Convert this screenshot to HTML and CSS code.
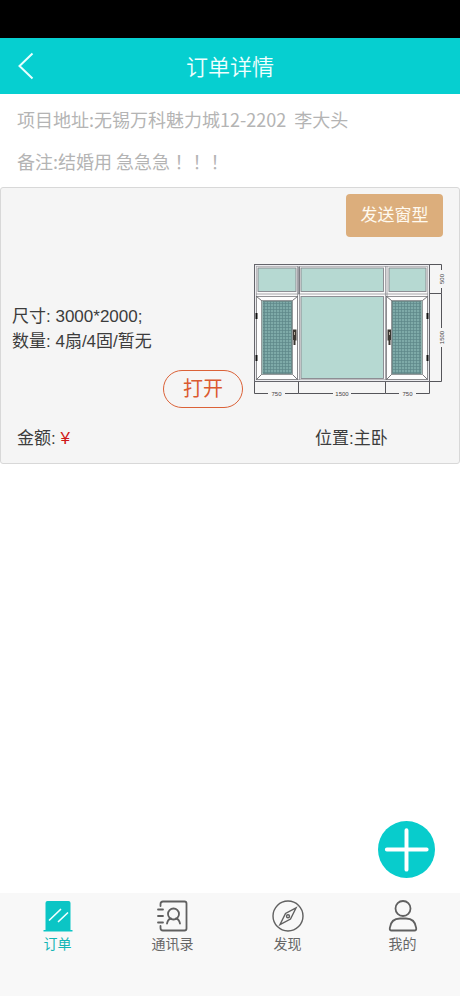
FILE: index.html
```html
<!DOCTYPE html>
<html lang="zh-CN">
<head>
<meta charset="utf-8">
<meta name="viewport" content="width=device-width, initial-scale=1">
<title>订单详情</title>
<link rel="stylesheet" href="styles.css">
</head>
<body>
<div class="status-bar"></div>
<header class="header">
  <button class="back" type="button" aria-label="返回">
    <svg width="16" height="28" viewBox="0 0 16 28"><path d="M14.500 1.500L1.500 14L14.500 26.500"/></svg>
  </button>
  <h1 class="title">订单详情</h1>
</header>
<main class="main">
  <section class="info">
    <p>项目地址:无锡万科魅力城12-2202&nbsp; 李大头</p>
    <p>备注:结婚用 急急急<span class="marks" lang="zh-TW">！！！</span></p>
  </section>
  <article class="card">
    <button class="send" type="button">发送窗型</button>
    <div class="detail">
      <div class="spec">
        <p>尺寸: 3000*2000;</p>
        <p>数量: 4扇/4固/暂无</p>
        <button class="open" type="button">打开</button>
      </div>
      <svg class="window" viewBox="250 260 200 148" role="img" aria-label="窗型图">
        <defs>
          <pattern id="mesh" width="3" height="3" patternUnits="userSpaceOnUse">
            <rect width="3" height="3" fill="#7eaaa8"/>
            <path d="M0 .5H3M.5 0V3" stroke="#5d8688" stroke-width=".7"/>
          </pattern>
          <g id="sash">
            <rect x="256.500" y="296.500" width="41" height="83" fill="#fdfdfd" stroke="#77777b" stroke-width=".8"/>
            <path d="M256.500 296.500l5 4M297.500 296.500l-5 4M256.500 379.500l5-5M297.500 379.500l-5-5" stroke="#55555b" stroke-width=".8"/>
            <rect x="261.500" y="300.500" width="31" height="74" fill="#b6d9d2" stroke="#77777b" stroke-width=".7"/>
            <rect x="263" y="301.500" width="28.500" height="72" fill="url(#mesh)" stroke="#5b7577" stroke-width=".7"/>
            <path d="M256.500 313v6M256.500 355v6" stroke="#111" stroke-width="2"/>
            <path d="M293 329.500h3.500v11h-1v4.500h-2v-5h-.5z" fill="#3c3832"/>
            <path d="M294.500 332v3" stroke="#b8ada0" stroke-width="1"/>
          </g>
        </defs>
        <rect x="254.500" y="264.500" width="175" height="117" fill="#ececef" stroke="#65656b"/>
        <rect x="256.500" y="266.500" width="171" height="113" fill="#fafafa" stroke="#a6a6aa" stroke-width=".7"/>
        <g fill="#b6d9d2" stroke="#85858c" stroke-width=".9">
          <rect x="258" y="268" width="38" height="23.500"/>
          <rect x="301" y="268" width="82.500" height="23.500"/>
          <rect x="389" y="268" width="37" height="23.500"/>
          <rect x="301" y="296.500" width="82.500" height="82"/>
        </g>
        <path d="M297.500 266V380M299.500 266V380M385.500 266V380M387 266V380M256 294H428" fill="none" stroke="#929298" stroke-width=".8"/>
        <path d="M299 267V294" stroke="#606068" stroke-width="1.200"/>
        <use href="#sash"/>
        <use href="#sash" transform="translate(684 0) scale(-1 1)"/>
        <path d="M254.500 382V393.500H268M285 393.500H298.500V382M298.500 393.500H333M351 393.500H385.500V382M385.500 393.500H399M416 393.500H429.500V382M430 264.500H441.500V270M441.500 288V293.500H430M441.500 293.500V328M441.500 347V381.500H430" fill="none" stroke="#55555a" stroke-width="1"/>
        <g class="dims">
          <text x="276.500" y="395.500">750</text>
          <text x="342" y="395.500">1500</text>
          <text x="407.500" y="395.500">750</text>
          <text transform="translate(443.500 279) rotate(-90)">500</text>
          <text transform="translate(443.500 337.500) rotate(-90)">1500</text>
        </g>
      </svg>
    </div>
    <div class="summary">
      <span>金额: <b class="price">¥</b></span>
      <span>位置:主卧</span>
    </div>
  </article>
</main>
<button class="add" type="button" aria-label="添加">
  <svg viewBox="0 0 58 58"><path d="M29 9.500V49.500M9 29H49.500"/></svg>
</button>
<nav class="tabs">
  <a class="tab active" href="#orders">
    <svg viewBox="0 0 32 32"><path d="M3.500 30V3q0-2 2-2H26.500q2 0 2 2V30h2v1.500H1.500V30z" fill="#0bc5c5"/><path d="M7.500 20L18.500 9.500M16.500 21.500L25.500 13" stroke="#f0ffff" stroke-width="1.700" stroke-linecap="round"/></svg>
    <span>订单</span>
  </a>
  <a class="tab" href="#contacts">
    <svg viewBox="0 0 32 32" class="line"><path d="M3.500 6V4q0-2.500 2.500-2.500H27.500q2 0 2 2V28.500q0 2-2 2H6q-2.500 0-2.500-2.500V26M1 9.500H6M1 16H6M1 22.500H6"/><circle cx="16.500" cy="14" r="5.500"/><path d="M10 23.500q1-4.500 4-5M23 23.500q-1-4.500-4-5"/></svg>
    <span>通讯录</span>
  </a>
  <a class="tab" href="#discover">
    <svg viewBox="0 0 32 32" class="line thin"><circle cx="16" cy="16" r="15"/><path d="M24 8L18.500 19L8 24.500L13.500 13.500Z"/><circle cx="16" cy="16.200" r="1.500"/></svg>
    <span>发现</span>
  </a>
  <a class="tab" href="#me">
    <svg viewBox="0 0 32 32" class="line"><circle cx="16" cy="8.500" r="7.500"/><path d="M4.500 30.500Q2.500 30.500 2.800 28Q4 18.500 13 18.500H19Q28 18.500 29.200 28Q29.500 30.500 27.500 30.500Z"/></svg>
    <span>我的</span>
  </a>
</nav>
</body>
</html>
```
FILE: styles.css
```css
* {
  box-sizing: border-box;
}

body {
  margin: 0;
  min-height: 100vh;
  display: flex;
  flex-direction: column;
  background: #fff;
  color: #3c3c3c;
  font-family: "Noto Sans CJK SC", sans-serif;
  font-weight: 400;
}

p, h1 {
  margin: 0;
}

button {
  font: inherit;
  border: 0;
  padding: 0;
  background: none;
  cursor: pointer;
}

svg {
  display: block;
  fill: none;
}

.status-bar {
  height: 38px;
  background: #000;
}

.header {
  display: grid;
  grid-template-columns: 48px 1fr 48px;
  align-items: center;
  height: 56px;
  background: #06cfd0;
  color: #f0ffff;
}

.back {
  padding-left: 18px;
}

.back svg {
  stroke: #e8ffff;
  stroke-width: 2;
}

.title {
  font-size: 22px;
  font-weight: 350;
  line-height: 32px;
  padding-bottom: 2px;
  text-align: center;
}

.main {
  flex: 1;
}

.info {
  padding: 4px 17px 5px;
  color: #b4b4b4;
  font-size: 18px;
  line-height: 42px;
}

.marks {
  font-family: "Noto Sans CJK TC", sans-serif;
}

.card {
  display: flex;
  flex-direction: column;
  padding: 6px 9px 12px 11px;
  border: 1px solid #d8d8d8;
  border-radius: 3px;
  background: #f5f5f5;
  font-family: "Liberation Sans", "Noto Sans CJK SC", sans-serif;
  font-size: 17px;
  line-height: 25px;
}

.send {
  align-self: flex-end;
  width: 97px;
  height: 43px;
  margin-right: 7px;
  border-radius: 4px;
  background: #dcae7c;
  color: #fffaf0;
}

.detail {
  display: grid;
  grid-template-columns: 1fr 200px;
  gap: 7px;
  align-items: end;
  margin-top: 23px;
}

.spec {
  display: flex;
  flex-direction: column;
}

.open {
  align-self: flex-end;
  width: 80px;
  height: 38px;
  margin-top: 16px;
  border: 1px solid #db6238;
  border-radius: 19px;
  color: #db5a30;
  font-size: 20px;
}

.dims {
  fill: #444;
  font-size: 6px;
  text-anchor: middle;
}

.summary {
  display: grid;
  grid-template-columns: 298px 1fr;
  margin-top: 18px;
  padding-left: 5px;
}

.price {
  color: #d01818;
  font-weight: 400;
}

.add {
  position: fixed;
  right: 25px;
  bottom: 118px;
  width: 57px;
  height: 57px;
  border-radius: 50%;
  background: #08cccc;
}

.add svg {
  stroke: #fff;
  stroke-width: 4;
  stroke-linecap: round;
}

.tabs {
  display: grid;
  grid-template-columns: repeat(4, 1fr);
  height: 103px;
  padding-top: 7px;
  background: #f8f8f8;
}

.tab {
  display: flex;
  flex-direction: column;
  align-items: center;
  color: #666;
  font-size: 14px;
  line-height: 22px;
  text-decoration: none;
}

.tab svg {
  width: 32px;
  height: 32px;
}

.tab.active {
  color: #12b5b5;
}

.line {
  stroke: #606060;
  stroke-width: 1.8;
  stroke-linecap: round;
}

.thin {
  stroke-width: 1.4;
}
```
